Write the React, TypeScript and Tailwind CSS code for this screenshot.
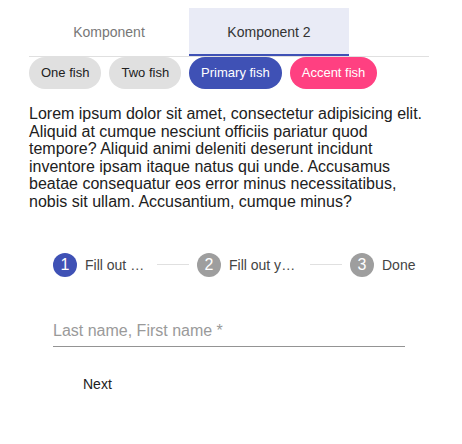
import { useState } from 'react';

const tabs = ['Komponent', 'Komponent 2'];

const chips = [
  { label: 'One fish', cls: 'bg-[#e0e0e0] text-[#212121]' },
  { label: 'Two fish', cls: 'bg-[#e0e0e0] text-[#212121]' },
  { label: 'Primary fish', cls: 'bg-[#3f51b5] text-white' },
  { label: 'Accent fish', cls: 'bg-[#ff4081] text-white' },
];

const StepIcon = ({ n, active }: { n: number; active?: boolean }) => (
  <div
    className={`w-6 h-6 shrink-0 rounded-full flex items-center justify-center text-white text-base leading-none ${
      active ? 'bg-[#3f51b5]' : 'bg-[#9e9e9e]'
    }`}
  >
    {n}
  </div>
);

export default function App() {
  const [active, setActive] = useState(1);

  return (
    <div className="w-[400px] ml-[29px] pt-2 font-['Liberation_Sans',Arial,sans-serif]">
      {/* Tabs */}
      <div className="flex border-b border-[#e0e0e0]">
        {tabs.map((t, i) => (
          <button
            key={t}
            onClick={() => setActive(i)}
            className={`w-[160px] h-12 flex items-center justify-center text-sm ${
              i === active
                ? 'bg-[#e9ebf6] text-[#333] border-b-2 border-[#3f51b5] pt-[2px]'
                : 'text-[#777]'
            }`}
          >
            {t}
          </button>
        ))}
      </div>

      {/* Chips */}
      <div className="flex gap-2">
        {chips.map((c) => (
          <span
            key={c.label}
            className={`h-8 px-3 rounded-full flex items-center text-[13px] ${c.cls}`}
          >
            {c.label}
          </span>
        ))}
      </div>

      <p className="mt-4 text-base leading-[17.6px] text-[#212121]">
        Lorem ipsum dolor sit amet, consectetur adipisicing elit. Aliquid at cumque nesciunt
        officiis pariatur quod tempore? Aliquid animi deleniti deserunt incidunt inventore ipsam
        itaque natus qui unde. Accusamus beatae consequatur eos error minus necessitatibus, nobis
        sit ullam. Accusantium, cumque minus?
      </p>

      {/* Stepper header */}
      <div className="mt-[18px] h-[72px] flex items-center pl-6 text-sm text-[#444]">
        <StepIcon n={1} active />
        <span className="ml-2 w-[60px] truncate">Fill out your name</span>
        <div className="ml-3 w-8 h-px bg-[#e0e0e0]" />
        <div className="ml-2">
          <StepIcon n={2} />
        </div>
        <span className="ml-2 w-[68px] truncate">Fill out your address</span>
        <div className="ml-[13px] w-8 h-px bg-[#e0e0e0]" />
        <div className="ml-2">
          <StepIcon n={3} />
        </div>
        <span className="ml-2">Done</span>
      </div>

      {/* Step content */}
      <div className="px-6">
        <div className="mt-[18px] border-b border-[#949494] pb-[3px]">
          <input
            placeholder="Last name, First name *"
            className="w-full h-5 leading-5 text-base outline-none bg-transparent placeholder:text-[#9a9a9a]"
          />
        </div>
        <button className="mt-[19px] ml-[14px] h-9 px-4 text-sm text-[#212121]">Next</button>
      </div>
    </div>
  );
}
